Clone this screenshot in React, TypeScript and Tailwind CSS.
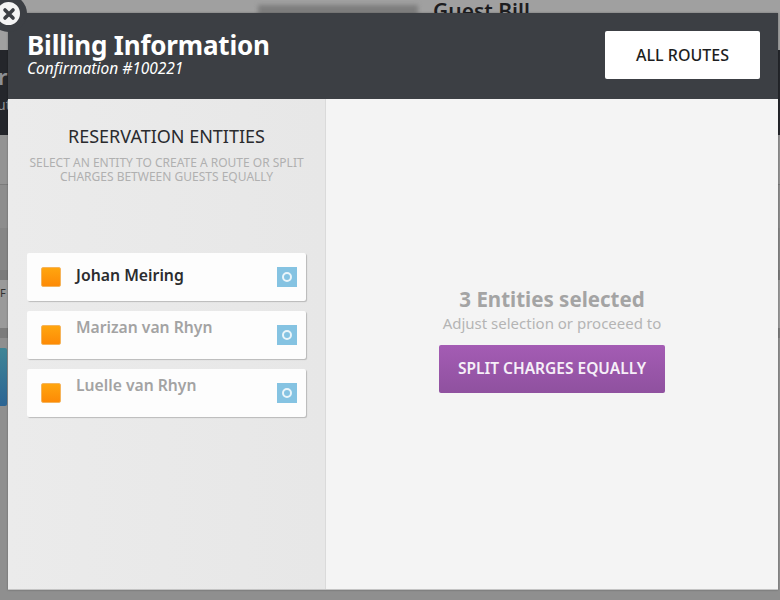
import React from "react";

const entities = [
  { name: "Johan Meiring", active: true },
  { name: "Marizan van Rhyn", active: false },
  { name: "Luelle van Rhyn", active: false },
];

function EntityRow({ name, active }: { name: string; active: boolean }) {
  return (
    <div className="flex h-12 items-center rounded-[2px] bg-[#fdfdfd] pl-[14px] pr-[9px] shadow-[1px_1px_1px_rgba(0,0,0,0.2)]">
      <span className="h-5 w-5 shrink-0 rounded-[2px] border border-[#f5b45c] bg-gradient-to-b from-[#ffa50f] to-[#fd8a06]" />
      <span
        className={
          active
            ? "mb-[2px] ml-[15px] flex-1 text-[15.8px] font-semibold text-[#2b2c2f]"
            : "mb-[15px] ml-[15px] flex-1 text-[15.7px] font-semibold text-[#a3a3a3]"
        }
      >
        {name}
      </span>
      <span className="flex h-5 w-5 shrink-0 items-center justify-center bg-[#85c3e2]">
        <span className="h-[10px] w-[10px] rounded-full border-2 border-[#eaf5fa]" />
      </span>
    </div>
  );
}

export default function App() {
  return (
    <div className="relative h-[600px] w-[780px] overflow-hidden bg-[#8f8f8f] font-['Noto_Sans',sans-serif]">
      {/* page behind the overlay */}
      <div className="flex h-[50px] items-start bg-[#a0a0a0] pl-[258px] text-[21px] font-semibold leading-[22px] text-[#1d1d1f]">
        <span className="mt-[5px] h-[10px] w-[160px] bg-[#7d7d7d] blur-[2px]" />
        <span className="ml-[15px]">Guest Bill</span>
      </div>
      <div className="h-[85px] bg-[#24262b] text-[#8d8f94]">
        <div className="-ml-[2px] pt-[13px] text-[22px] font-semibold leading-[26px]">r</div>
        <div className="-ml-[3px] pt-[8px] text-[14px] leading-[16px]">ut</div>
      </div>
      <div className="h-[50px] border-b border-[#7b7b7b] bg-[#939393]" />
      <div className="h-[43px] bg-[#8d8d8d]" />
      <div className="h-[42px] bg-[#868686]" />
      <div className="h-[10px] bg-[#7a7a7a]" />
      <div className="h-12 bg-[#9a9a9a] pt-[5px] text-[11px] text-[#333]">F</div>
      <div className="h-[10px] bg-[#7c7c7c]" />
      <div className="h-[10px] bg-[#8f8f8f]" />
      <div className="h-[58px] w-[7px] rounded-r-[2px] bg-gradient-to-b from-[#3f8596] to-[#2c6493]" />

      {/* modal */}
      <div className="absolute left-2 top-[13px] flex h-[577px] w-[770px] flex-col shadow-[0_0_2px_rgba(0,0,0,0.3)]">
        <div className="flex h-[86px] shrink-0 items-center justify-between bg-[#3c3f44] pl-[19px] pr-[18px]">
          <div className="-mt-[6px] text-white">
            <div className="text-[26px] font-bold leading-[30px] tracking-[-0.2px]">Billing Information</div>
            <div className="text-[15.5px] italic leading-[17px]">Confirmation #100221</div>
          </div>
          <button className="-mt-[2px] flex h-12 w-[155px] items-center justify-center rounded-[2px] bg-white text-[16px] font-medium text-[#1d1e21]">
            ALL ROUTES
          </button>
        </div>
        <div className="flex min-h-0 flex-1 border-b border-[#c4c4c4]">
          <div className="w-[318px] shrink-0 border-r border-[#dadada] bg-gradient-to-r from-[#ebebeb] to-[#e7e7e7] pl-[19px] pr-[19px]">
            <h2 className="mt-[24px] text-center text-[18px] leading-[26px] text-[#2a2b2e]">RESERVATION ENTITIES</h2>
            <p className="mt-[7px] text-center text-[12px] leading-[14px] text-[#b0b0b0]">
              SELECT AN ENTITY TO CREATE A ROUTE OR SPLIT CHARGES BETWEEN GUESTS EQUALLY
            </p>
            <div className="mt-[69px] flex flex-col gap-[10px]">
              {entities.map((e) => (
                <EntityRow key={e.name} name={e.name} active={e.active} />
              ))}
            </div>
          </div>
          <div className="flex flex-1 flex-col items-center bg-[#f4f4f4] pt-[187px]">
            <div className="text-[20.5px] font-bold leading-[26px] text-[#a4a4a4]">3 Entities selected</div>
            <div className="text-[15px] leading-[22px] text-[#b4b4b4]">Adjust selection or proceeed to</div>
            <button className="mt-[11px] flex h-12 w-[226px] items-center justify-center rounded-[2px] bg-gradient-to-b from-[#a45cb4] to-[#8f519f] text-[15.5px] font-semibold text-[#f6eff8]">
              SPLIT CHARGES EQUALLY
            </button>
          </div>
        </div>
      </div>

      {/* close button */}
      <div className="absolute -left-[3px] top-[2px] flex h-[23px] w-[23px] items-center justify-center rounded-full bg-[#f4f4f4] ring-[7px] ring-[#3c3f44]">
        <svg viewBox="0 0 14 14" className="h-[14px] w-[14px]">
          <path d="M3 3l8 8M11 3l-8 8" stroke="#3c3f44" strokeWidth="3.6" strokeLinecap="round" />
        </svg>
      </div>
    </div>
  );
}
